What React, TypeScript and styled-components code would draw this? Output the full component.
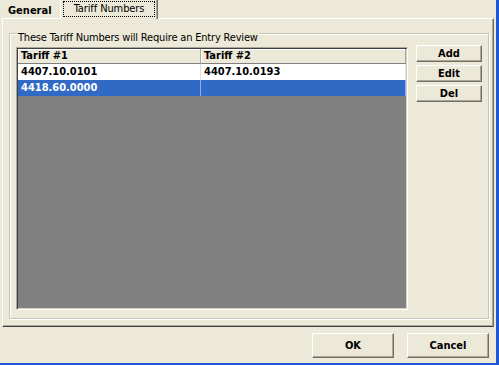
import React from "react";
import styled, { createGlobalStyle } from "styled-components";

const GlobalStyle = createGlobalStyle`
  html, body { margin: 0; padding: 0; background: #ECE9D8; }
  body {
    font-family: "DejaVu Sans Condensed", "DejaVu Sans", sans-serif;
    font-stretch: condensed;
    font-size: 11px;
    color: #000;
  }
  * { box-sizing: border-box; }
`;

const Window = styled.div`
  width: 499px;
  height: 365px;
  background: #ECE9D8;
  border-right: 3px solid #1D57D8;
  border-bottom: 2px solid #1D57D8;
  display: flex;
  flex-direction: column;
  overflow: hidden;
`;

const TabStrip = styled.div`
  height: 18px;
  display: flex;
  align-items: flex-start;
  padding-left: 2px;
  position: relative;
  z-index: 1;
`;

const Tab = styled.div<{ $active?: boolean }>`
  height: ${(p) => (p.$active ? "19px" : "18px")};
  width: ${(p) => (p.$active ? "98px" : "58px")};
  padding: ${(p) => (p.$active ? "1px 2px 0 2px" : "4px 0 0 6px")};
  font-weight: ${(p) => (p.$active ? "normal" : "bold")};
  line-height: 14px;
  background: #ECE9D8;
  border-left: ${(p) => (p.$active ? "1px solid #fff" : "none")};
  border-right: ${(p) => (p.$active ? "1px solid #716F64" : "none")};
  box-shadow: ${(p) => (p.$active ? "inset -1px 0 0 #ACA899" : "none")};
  white-space: nowrap;
`;

const FocusRect = styled.div`
  border: 1px dotted #000;
  height: 16px;
  line-height: 14px;
  text-align: center;
  letter-spacing: -0.1px;
`;

const Panel = styled.div`
  margin-left: 2px;
  width: 492px;
  height: 309px;
  border-top: 1px solid #fff;
  border-left: 1px solid #fff;
  border-right: 1px solid #716F64;
  border-bottom: 1px solid #404040;
  box-shadow: inset -1px -1px 0 #ACA899;
  padding: 14px 0 0 6px;
`;

const GroupBox = styled.div`
  position: relative;
  width: 480px;
  height: 286px;
  border: 1px solid #C7C4B4;
  box-shadow: inset 1px 1px 0 #fff, 1px 1px 0 #fff;
  padding: 11px 6px 8px 6px;
  display: flex;
  align-items: flex-start;
  gap: 8px;
`;

const Legend = styled.span`
  position: absolute;
  top: -3px;
  left: 7px;
  padding: 0 1px 0 1px;
  background: #ECE9D8;
  line-height: 13px;
  letter-spacing: -0.18px;
  white-space: nowrap;
`;

const Grid = styled.div`
  margin-top: 2px;
  width: 392px;
  height: 263px;
  background: #808080;
  border-top: 1px solid #ACA899;
  border-left: 1px solid #ACA899;
  border-right: 1px solid #fff;
  border-bottom: 1px solid #fff;
  box-shadow: inset 1px 1px 0 #404040, inset -1px -1px 0 #D4D0C8;
  padding: 1px;
  display: flex;
  flex-direction: column;
`;

const Row = styled.div<{ $bg: string; $h: number }>`
  display: grid;
  grid-template-columns: 183px 1fr;
  height: ${(p) => p.$h}px;
  background: ${(p) => p.$bg};
`;

const HeadCell = styled.div`
  font-weight: bold;
  line-height: 14px;
  padding-left: 3px;
  border-right: 1px solid #ACA899;
  border-bottom: 1px solid #808080;
  box-shadow: inset 1px 1px 0 #fff;
  white-space: nowrap;
`;

const Cell = styled.div<{ $sel?: boolean }>`
  font-weight: bold;
  line-height: 16px;
  padding-left: 3px;
  color: ${(p) => (p.$sel ? "#fff" : "#000")};
  border-right: 1px solid ${(p) => (p.$sel ? "#8FAEE6" : "#E4E2D8")};
  white-space: nowrap;
`;

const SideButtons = styled.div`
  width: 66px;
  display: flex;
  flex-direction: column;
  gap: 3px;
`;

const Button = styled.button<{ $w?: number; $h?: number }>`
  width: ${(p) => p.$w ?? 66}px;
  height: ${(p) => p.$h ?? 17}px;
  padding: 0;
  margin: 0;
  font-family: inherit;
  font-stretch: condensed;
  font-size: 11px;
  font-weight: bold;
  color: #000;
  background: #ECE9D8;
  border-top: 1px solid #fff;
  border-left: 1px solid #fff;
  border-right: 1px solid #716F64;
  border-bottom: 1px solid #716F64;
  box-shadow: inset -1px -1px 0 #ACA899;
  text-align: center;
  line-height: 14px;
`;

const Footer = styled.div`
  flex: 1;
  display: flex;
  justify-content: flex-end;
  align-items: flex-start;
  gap: 13px;
  padding: 6px 7px 0 0;
`;

export default function App() {
  return (
    <>
      <GlobalStyle />
      <Window>
        <TabStrip>
          <Tab>General</Tab>
          <Tab $active>
            <FocusRect>Tariff Numbers</FocusRect>
          </Tab>
        </TabStrip>
        <Panel>
          <GroupBox>
            <Legend>These Tariff Numbers will Require an Entry Review</Legend>
            <Grid>
              <Row $bg="#ECE9D8" $h={15}>
                <HeadCell>Tariff #1</HeadCell>
                <HeadCell>Tariff #2</HeadCell>
              </Row>
              <Row $bg="#fff" $h={16}>
                <Cell>4407.10.0101</Cell>
                <Cell>4407.10.0193</Cell>
              </Row>
              <Row $bg="#316AC5" $h={16}>
                <Cell $sel>4418.60.0000</Cell>
                <Cell $sel></Cell>
              </Row>
            </Grid>
            <SideButtons>
              <Button>Add</Button>
              <Button>Edit</Button>
              <Button>Del</Button>
            </SideButtons>
          </GroupBox>
        </Panel>
        <Footer>
          <Button $w={82} $h={25}>OK</Button>
          <Button $w={82} $h={25}>Cancel</Button>
        </Footer>
      </Window>
    </>
  );
}
